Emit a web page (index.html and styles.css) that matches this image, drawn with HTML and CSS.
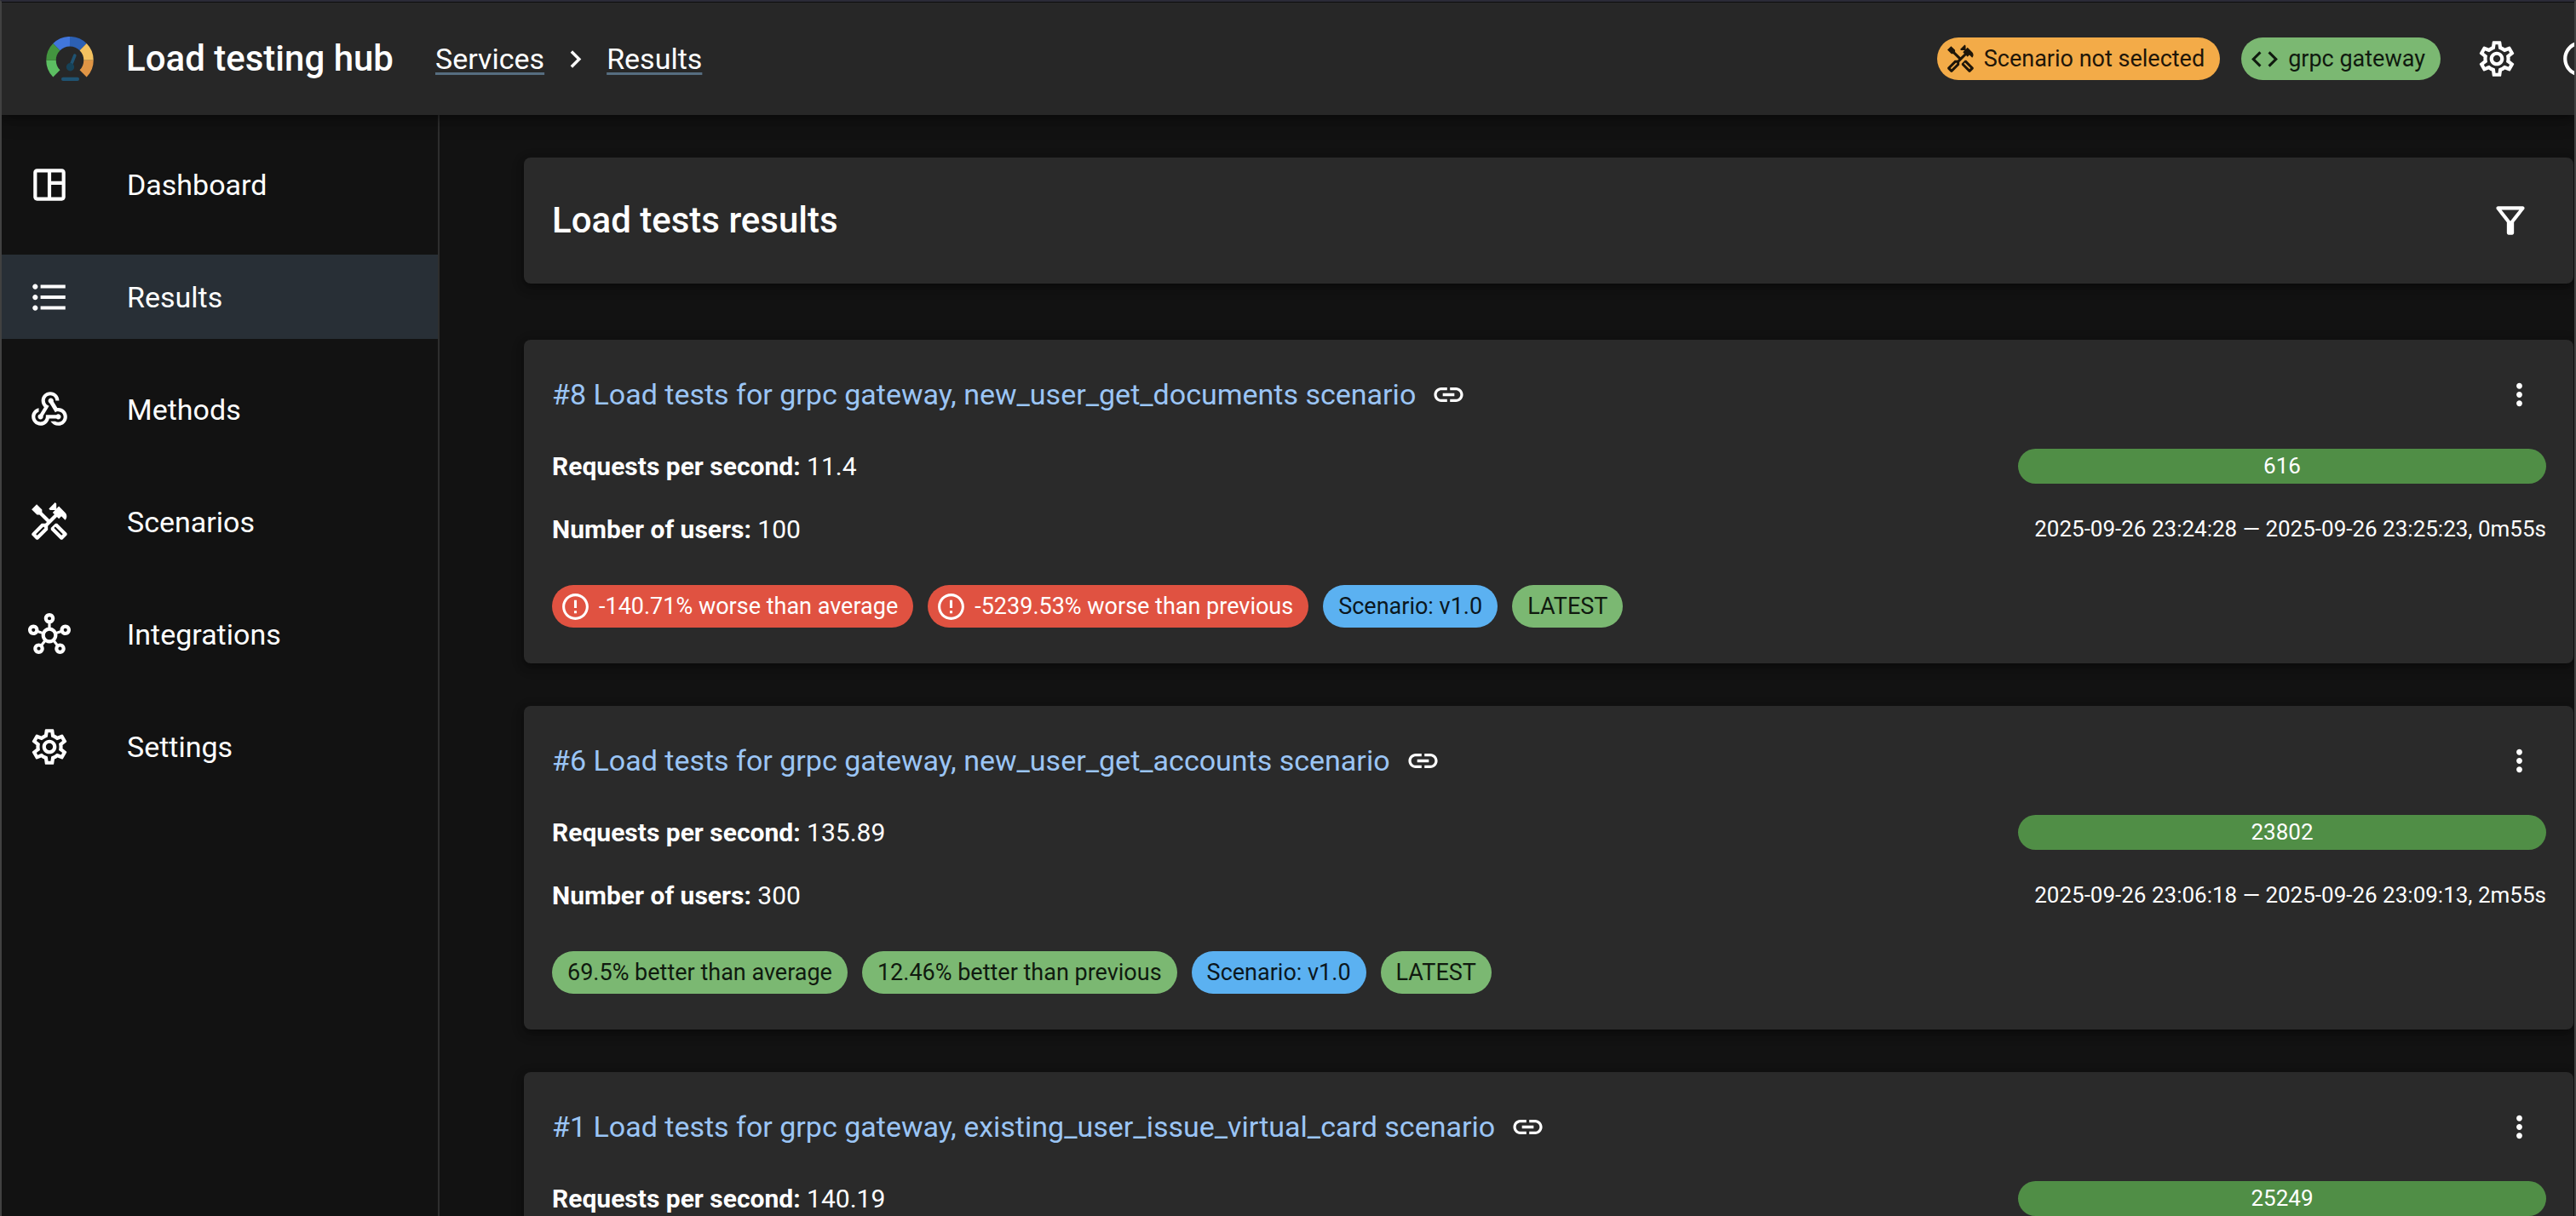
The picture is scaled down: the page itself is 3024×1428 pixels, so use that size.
FILE: index.html
```html
<!DOCTYPE html>
<html lang="en">
<head>
<meta charset="utf-8">
<meta name="viewport" content="width=device-width, initial-scale=1">
<title>Load testing hub</title>
<link rel="stylesheet" href="styles.css">
</head>
<body>
<svg class="sprite" aria-hidden="true">
  <symbol id="i-dashboard" viewBox="0 0 24 24"><path d="M19 3H5c-1.1 0-2 .9-2 2v14c0 1.1.9 2 2 2h14c1.1 0 2-.9 2-2V5c0-1.1-.9-2-2-2zM5 19V5h6v14H5zm14 0h-6v-7h6v7zm0-9h-6V5h6v5z"/></symbol>
  <symbol id="i-list" viewBox="0 0 24 24"><path d="M4 10.5c-.83 0-1.5.67-1.5 1.5s.67 1.5 1.5 1.5 1.5-.67 1.5-1.5-.67-1.5-1.5-1.5zm0-6c-.83 0-1.5.67-1.5 1.5S3.17 7.5 4 7.5 5.5 6.83 5.5 6 4.83 4.5 4 4.5zm0 12c-.83 0-1.5.68-1.5 1.5s.68 1.5 1.5 1.5 1.5-.68 1.5-1.5-.67-1.5-1.5-1.5zM7 19h14v-2H7v2zm0-6h14v-2H7v2zm0-8v2h14V5H7z"/></symbol>
  <symbol id="i-webhook" viewBox="0 0 24 24"><path d="M10 15h5.88c.27-.31.67-.5 1.12-.5.83 0 1.5.67 1.5 1.5s-.67 1.5-1.5 1.5c-.44 0-.84-.19-1.12-.5H11.9c-.46 2.28-2.48 4-4.9 4-2.76 0-5-2.24-5-5 0-2.42 1.72-4.44 4-4.9v2.07c-1.16.41-2 1.53-2 2.83 0 1.65 1.35 3 3 3s3-1.35 3-3v-1zm2.500-11c1.650 0 3 1.350 3 3h2c0-2.760-2.240-5-5-5s-5 2.240-5 5c0 1.430.6 2.710 1.550 3.620l-2.350 3.900c-.68.140-1.200.750-1.200 1.480 0 .83.67 1.500 1.500 1.500s1.500-.67 1.500-1.500c0-.16-.02-.31-.07-.45l3.380-5.630C10.490 9.610 9.500 8.420 9.500 7c0-1.650 1.350-3 3-3zm4.500 9c-.64 0-1.230.2-1.720.54l-3.050-5.070c-.53-.28-.9-.83-.9-1.470 0-.83.67-1.500 1.500-1.500s1.500.67 1.500 1.500c0 .15-.02.29-.06.43l2.190 3.650c.18-.02.36-.03.54-.03 2.760 0 5 2.240 5 5s-2.240 5-5 5c-1.850 0-3.470-1.010-4.330-2.500h2.670c.48.32 1.050.5 1.660.5 1.650 0 3-1.350 3-3s-1.350-3-3-3z"/></symbol>
  <symbol id="i-tools" viewBox="0 0 24 24"><path d="m21.670 18.170-5.300-5.300h-.99l-2.540 2.540v.99l5.300 5.300c.39.39 1.020.39 1.410 0l2.120-2.120c.39-.38.39-1.020 0-1.410zm-2.830 1.420-4.240-4.240.71-.71 4.240 4.240-.71.71z"/><path d="m17.340 10.190 1.410-1.410 2.120 2.120c1.170-1.170 1.170-3.070 0-4.240l-3.540-3.540-1.410 1.410V1.710L15.220 1l-3.540 3.540.71.71h2.830l-1.410 1.410 1.060 1.060-2.890 2.890-4.130-4.130V5.060L4.830 2.040 2 4.870 5.030 7.900h1.410l4.130 4.130-.85.85H7.600l-5.300 5.300c-.39.39-.39 1.020 0 1.410l2.120 2.120c.39.39 1.020.39 1.410 0l5.300-5.300v-2.120l5.150-5.150 1.060 1.050zm-7.980 5.150-4.240 4.240-.71-.71 4.240-4.240.71.71z"/></symbol>
  <symbol id="i-hub" viewBox="0 0 24 24"><path fill-rule="evenodd" d="M8.400 18.200c.38.5.6 1.120.6 1.800 0 1.660-1.340 3-3 3s-3-1.340-3-3 1.340-3 3-3c.44 0 .85.09 1.230.26l1.410-1.770c-.92-1.030-1.290-2.390-1.090-3.690l-2.030-.68c-.54.83-1.460 1.380-2.520 1.380-1.660 0-3-1.340-3-3s1.340-3 3-3 3 1.340 3 3c0 .07 0 .14-.01.21l2.030.68c.64-1.210 1.820-2.090 3.220-2.320V5.910C9.960 5.570 9 4.400 9 3c0-1.660 1.340-3 3-3s3 1.340 3 3c0 1.400-.96 2.570-2.250 2.910v2.160c1.400.23 2.580 1.110 3.220 2.320l2.030-.68C18 9.640 18 9.570 18 9.500c0-1.660 1.340-3 3-3s3 1.340 3 3-1.340 3-3 3c-1.060 0-1.980-.55-2.520-1.370l-2.030.68c.2 1.290-.16 2.650-1.090 3.690l1.410 1.770C17.150 17.090 17.560 17 18 17c1.660 0 3 1.340 3 3s-1.340 3-3 3-3-1.340-3-3c0-.68.22-1.300.6-1.800l-1.410-1.770c-1.350.75-3.010.76-4.370 0L8.400 18.200zM11 3a1 1 0 1 0 2 0a1 1 0 1 0-2 0zM2 9.500a1 1 0 1 0 2 0a1 1 0 1 0-2 0zM20 9.500a1 1 0 1 0 2 0a1 1 0 1 0-2 0zM5 20a1 1 0 1 0 2 0a1 1 0 1 0-2 0zM17 20a1 1 0 1 0 2 0a1 1 0 1 0-2 0zM9.500 12.500a2.500 2.500 0 1 0 5 0a2.500 2.500 0 1 0-5 0z"/></symbol>
  <symbol id="i-settings" viewBox="0 0 24 24"><path d="M19.430 12.980c.04-.32.07-.64.07-.98 0-.34-.03-.66-.07-.98l2.110-1.650c.19-.15.24-.42.12-.64l-2-3.460c-.09-.16-.26-.25-.44-.25-.06 0-.12.01-.17.03l-2.490 1c-.52-.4-1.080-.73-1.690-.98l-.38-2.650C14.460 2.180 14.250 2 14 2h-4c-.25 0-.46.18-.49.42l-.38 2.650c-.61.25-1.170.59-1.690.98l-2.490-1c-.06-.02-.12-.03-.18-.03-.17 0-.34.09-.43.25l-2 3.460c-.13.22-.07.49.12.64l2.110 1.650c-.04.32-.07.65-.07.98 0 .33.03.66.07.98l-2.110 1.650c-.19.15-.24.42-.12.64l2 3.460c.09.16.26.25.44.25.06 0 .12-.01.17-.03l2.490-1c.52.4 1.080.73 1.690.98l.38 2.650c.03.24.24.42.49.42h4c.25 0 .46-.18.49-.42l.38-2.650c.61-.25 1.170-.59 1.690-.98l2.490 1c.06.02.12.03.18.03.17 0 .34-.09.43-.25l2-3.460c.12-.22.07-.49-.12-.64l-2.110-1.650zm-1.980-1.710c.04.31.05.52.05.73 0 .21-.02.43-.05.73l-.14 1.130.89.7 1.080.84-.7 1.210-1.270-.51-1.040-.42-.9.68c-.43.32-.84.56-1.250.73l-1.060.43-.16 1.130-.2 1.350h-1.400l-.19-1.350-.16-1.130-1.060-.43c-.43-.18-.83-.41-1.230-.71l-.91-.7-1.060.43-1.270.51-.7-1.210 1.080-.84.89-.7-.14-1.130c-.03-.31-.05-.54-.05-.74s.02-.43.05-.73l.14-1.130-.89-.7-1.080-.84.7-1.210 1.270.51 1.040.42.9-.68c.43-.32.84-.56 1.250-.73l1.060-.43.16-1.130.2-1.350h1.390l.19 1.350.16 1.130 1.060.43c.43.18.83.41 1.230.71l.91.7 1.060-.43 1.270-.51.7 1.210-1.070.85-.89.7.14 1.130zM12 8c-2.210 0-4 1.790-4 4s1.790 4 4 4 4-1.790 4-4-1.790-4-4-4zm0 6c-1.100 0-2-.9-2-2s.9-2 2-2 2 .9 2 2-.9 2-2 2z"/></symbol>
  <symbol id="i-filter" viewBox="0 0 24 24"><path d="M7 6h10l-5.010 6.300L7 6zm-2.750-.39C6.270 8.200 10 13 10 13v6c0 .55.45 1 1 1h2c.55 0 1-.45 1-1v-6s3.720-4.800 5.740-7.390c.51-.66.04-1.610-.79-1.610H5.040c-.83 0-1.300.95-.79 1.610z"/></symbol>
  <symbol id="i-more" viewBox="0 0 24 24"><path d="M12 8c1.100 0 2-.9 2-2s-.9-2-2-2-2 .9-2 2 .9 2 2 2zm0 2c-1.100 0-2 .9-2 2s.9 2 2 2 2-.9 2-2-.9-2-2-2zm0 6c-1.100 0-2 .9-2 2s.9 2 2 2 2-.9 2-2-.9-2-2-2z"/></symbol>
  <symbol id="i-link" viewBox="0 0 24 24"><path d="M3.900 12c0-1.710 1.390-3.100 3.100-3.100h4V7H7c-2.760 0-5 2.240-5 5s2.240 5 5 5h4v-1.900H7c-1.710 0-3.100-1.390-3.100-3.100zM8 13h8v-2H8v2zm9-6h-4v1.900h4c1.710 0 3.100 1.390 3.100 3.100s-1.390 3.100-3.100 3.100h-4V17h4c2.760 0 5-2.240 5-5s-2.240-5-5-5z"/></symbol>
  <symbol id="i-error" viewBox="0 0 24 24"><path d="M11 15h2v2h-2zm0-8h2v6h-2zm.99-5C6.470 2 2 6.480 2 12s4.470 10 9.990 10C17.520 22 22 17.520 22 12S17.520 2 11.990 2zM12 20c-4.420 0-8-3.580-8-8s3.580-8 8-8 8 3.580 8 8-3.580 8-8 8z"/></symbol>
  <symbol id="i-code" viewBox="0 0 24 24"><path d="M9.400 16.600 4.800 12l4.600-4.600L8 6l-6 6 6 6 1.400-1.400zm5.200 0 4.600-4.600-4.600-4.600L16 6l6 6-6 6-1.400-1.400z"/></symbol>
  <symbol id="i-next" viewBox="0 0 24 24"><path d="M10 6 8.590 7.410 13.170 12l-4.580 4.590L10 18l6-6z"/></symbol>
  <symbol id="i-circle" viewBox="0 0 24 24"><path d="M12 2C6.480 2 2 6.480 2 12s4.480 10 10 10 10-4.480 10-10S17.520 2 12 2zm0 18c-4.410 0-8-3.590-8-8s3.590-8 8-8 8 3.590 8 8-3.590 8-8 8z"/></symbol>
</svg>

<header class="topbar">
  <svg class="logo" viewBox="0 0 56 52" aria-hidden="true">
    <g fill="none" stroke-width="11.500">
      <path stroke="#5cbf62" d="M12.400 43.400A22 22 0 0 1 6 27.700"/>
      <path stroke="#43953f" d="M6 27.700A22 22 0 0 1 12.400 12.100"/>
      <path stroke="#4176dd" d="M12.400 12.100A22 22 0 0 1 28 5.700"/>
      <path stroke="#2c60b4" d="M28 5.700A22 22 0 0 1 43.600 12.100"/>
      <path stroke="#f3c260" d="M43.600 12.100A22 22 0 0 1 50 27.700"/>
      <path stroke="#e09545" d="M50 27.700A22 22 0 0 1 43.600 43.400"/>
    </g>
    <path fill="none" stroke="#1f5372" stroke-width="3.600" stroke-linecap="round" d="M33.800 22.200L28.600 35"/>
    <circle cx="28.500" cy="35.800" r="4.700" fill="#164258"/>
    <rect x="18" y="47.700" width="21" height="4.300" rx="2" fill="#1f5372"/>
  </svg>
  <span class="brand">Load testing hub</span>
  <nav class="crumbs" aria-label="Breadcrumb">
    <a href="#services">Services</a>
    <svg class="icon icon-md" aria-hidden="true"><use href="#i-next"/></svg>
    <a href="#results">Results</a>
  </nav>
  <div class="actions">
    <button class="chip chip-orange" type="button"><svg class="icon icon-sm" aria-hidden="true"><use href="#i-tools"/></svg>Scenario not selected</button>
    <button class="chip chip-green" type="button"><svg class="icon icon-sm" aria-hidden="true"><use href="#i-code"/></svg>grpc gateway</button>
    <button class="icon-btn" type="button" aria-label="Settings"><svg class="icon" aria-hidden="true"><use href="#i-settings"/></svg></button>
    <button class="icon-btn" type="button" aria-label="Theme"><svg class="icon" aria-hidden="true"><use href="#i-circle"/></svg></button>
  </div>
</header>

<div class="shell">
  <nav class="sidebar" aria-label="Main">
    <a class="nav-item" href="#dashboard"><svg class="icon" aria-hidden="true"><use href="#i-dashboard"/></svg>Dashboard</a>
    <a class="nav-item is-active" href="#results"><svg class="icon" aria-hidden="true"><use href="#i-list"/></svg>Results</a>
    <a class="nav-item" href="#methods"><svg class="icon" aria-hidden="true"><use href="#i-webhook"/></svg>Methods</a>
    <a class="nav-item" href="#scenarios"><svg class="icon" aria-hidden="true"><use href="#i-tools"/></svg>Scenarios</a>
    <a class="nav-item" href="#integrations"><svg class="icon" aria-hidden="true"><use href="#i-hub"/></svg>Integrations</a>
    <a class="nav-item" href="#settings"><svg class="icon" aria-hidden="true"><use href="#i-settings"/></svg>Settings</a>
  </nav>

  <main class="content">
    <section class="card title-card">
      <h1>Load tests results</h1>
      <button class="icon-btn" type="button" aria-label="Filter"><svg class="icon" aria-hidden="true"><use href="#i-filter"/></svg></button>
    </section>

    <div class="results">
      <article class="card result">
        <div class="result-head">
          <a class="result-title" href="#8">#8 Load tests for grpc gateway, new_user_get_documents scenario</a>
          <svg class="icon icon-md" aria-hidden="true"><use href="#i-link"/></svg>
          <button class="icon-btn menu" type="button" aria-label="More"><svg class="icon icon-md" aria-hidden="true"><use href="#i-more"/></svg></button>
        </div>
        <div class="result-body">
          <div class="stats">
            <p><strong>Requests per second:</strong> 11.4</p>
            <p><strong>Number of users:</strong> 100</p>
          </div>
          <div class="run">
            <div class="bar">616</div>
            <p class="period">2025-09-26 23:24:28 — 2025-09-26 23:25:23, 0m55s</p>
          </div>
        </div>
        <div class="chips">
          <span class="chip chip-red"><svg class="icon icon-sm" aria-hidden="true"><use href="#i-error"/></svg>-140.71% worse than average</span>
          <span class="chip chip-red"><svg class="icon icon-sm" aria-hidden="true"><use href="#i-error"/></svg>-5239.53% worse than previous</span>
          <span class="chip chip-blue">Scenario: v1.0</span>
          <span class="chip chip-green">LATEST</span>
        </div>
      </article>

      <article class="card result">
        <div class="result-head">
          <a class="result-title" href="#6">#6 Load tests for grpc gateway, new_user_get_accounts scenario</a>
          <svg class="icon icon-md" aria-hidden="true"><use href="#i-link"/></svg>
          <button class="icon-btn menu" type="button" aria-label="More"><svg class="icon icon-md" aria-hidden="true"><use href="#i-more"/></svg></button>
        </div>
        <div class="result-body">
          <div class="stats">
            <p><strong>Requests per second:</strong> 135.89</p>
            <p><strong>Number of users:</strong> 300</p>
          </div>
          <div class="run">
            <div class="bar">23802</div>
            <p class="period">2025-09-26 23:06:18 — 2025-09-26 23:09:13, 2m55s</p>
          </div>
        </div>
        <div class="chips">
          <span class="chip chip-green">69.5% better than average</span>
          <span class="chip chip-green">12.46% better than previous</span>
          <span class="chip chip-blue">Scenario: v1.0</span>
          <span class="chip chip-green">LATEST</span>
        </div>
      </article>

      <article class="card result">
        <div class="result-head">
          <a class="result-title" href="#1">#1 Load tests for grpc gateway, existing_user_issue_virtual_card scenario</a>
          <svg class="icon icon-md" aria-hidden="true"><use href="#i-link"/></svg>
          <button class="icon-btn menu" type="button" aria-label="More"><svg class="icon icon-md" aria-hidden="true"><use href="#i-more"/></svg></button>
        </div>
        <div class="result-body">
          <div class="stats">
            <p><strong>Requests per second:</strong> 140.19</p>
          </div>
          <div class="run">
            <div class="bar">25249</div>
          </div>
        </div>
      </article>
    </div>
  </main>
</div>
</body>
</html>
```
FILE: styles.css
```css
* {
  box-sizing: border-box;
}

body {
  margin: 0;
  height: 100vh;
  display: flex;
  flex-direction: column;
  overflow: hidden;
  border-top: 2px solid #2b2b37;
  border-left: 2px solid #414141;
  border-right: 2px solid #414141;
  background: #121212;
  color: #fff;
  font-family: Roboto, "Liberation Sans", sans-serif;
  font-size: 34px;
  line-height: 50px;
}

p,
h1 {
  margin: 0;
}

a {
  color: inherit;
  text-decoration: none;
}

button {
  border: 0;
  padding: 0;
  background: none;
  color: inherit;
  font: inherit;
}

.sprite {
  position: absolute;
  width: 0;
  height: 0;
}

.icon {
  width: 50px;
  height: 50px;
  flex: none;
  display: block;
  fill: currentColor;
}

.icon-md {
  width: 41px;
  height: 41px;
}

.icon-sm {
  width: 37px;
  height: 37px;
}

.icon-btn {
  display: block;
  flex: none;
}

.topbar {
  position: relative;
  z-index: 1;
  flex: none;
  display: flex;
  align-items: center;
  height: 133px;
  padding-left: 52px;
  border-top: 1px solid #0e0e0e;
  background: #272727;
  box-shadow: 0 4px 8px rgba(0, 0, 0, 0.3), 0 8px 20px rgba(0, 0, 0, 0.2);
}

.logo {
  width: 56px;
  height: 52px;
  flex: none;
}

.brand {
  margin: 0 49px 0 38px;
  font-size: 42px;
  font-weight: 500;
  white-space: nowrap;
}

.crumbs {
  display: flex;
  align-items: center;
  gap: 16px;
}

.crumbs a {
  text-decoration: underline;
  text-decoration-color: #566d80;
  text-decoration-thickness: 3px;
  text-underline-offset: 4px;
}

.actions {
  display: flex;
  align-items: center;
  gap: 25px;
  margin-left: auto;
  margin-right: -33px;
}

.actions .icon-btn {
  margin-left: 16px;
}

.actions .icon-btn + .icon-btn {
  margin-left: 24px;
}

.chip {
  display: inline-flex;
  align-items: center;
  gap: 9px;
  height: 50px;
  padding: 0 18px;
  border-radius: 25px;
  font-size: 27px;
  white-space: nowrap;
}

.chip:has(.icon) {
  padding-left: 9px;
}

.chip-orange {
  background: #f3ab48;
  color: #1f1609;
}

.chip-green {
  background: #7bb872;
  color: #101a0f;
}

.chip-blue {
  background: #5bb1f1;
  color: #0b1720;
}

.chip-red {
  background: #e05241;
}

.shell {
  flex: 1;
  min-height: 0;
  display: flex;
}

.sidebar {
  flex: none;
  width: 514px;
  display: flex;
  flex-direction: column;
  gap: 33px;
  padding-top: 32px;
  border-right: 2px solid #2e2e2e;
}

.nav-item {
  display: flex;
  align-items: center;
  gap: 66px;
  height: 99px;
  padding-left: 31px;
}

.nav-item.is-active {
  background: #282f36;
}

.content {
  flex: 1;
  min-width: 0;
  display: flex;
  flex-direction: column;
  gap: 66px;
  padding: 50px 1px 0 99px;
}

.card {
  border-radius: 8px;
  background: #2a2a2a;
  box-shadow: 0 4px 8px rgba(0, 0, 0, 0.3), 0 4px 16px rgba(0, 0, 0, 0.2);
}

.title-card {
  flex: none;
  display: flex;
  align-items: center;
  justify-content: space-between;
  height: 148px;
  padding: 0 49px 0 33px;
}

.title-card h1 {
  font-size: 42px;
  font-weight: 500;
}

.results {
  display: flex;
  flex-direction: column;
  gap: 50px;
}

.result {
  flex: none;
  height: 380px;
  padding: 39px 32px 0 33px;
}

.result-head {
  display: flex;
  align-items: center;
  gap: 18px;
}

.result-title {
  color: #9bc5f5;
}

.menu {
  margin-left: auto;
  margin-right: 11px;
}

.result-body {
  display: flex;
  justify-content: space-between;
  margin-top: 39px;
  font-size: 30px;
  line-height: 41px;
}

.stats,
.run {
  display: flex;
  flex-direction: column;
  gap: 33px;
}

.run {
  width: 620px;
}

.bar {
  height: 41px;
  border-radius: 21px;
  background: #508e46;
  font-size: 26px;
  text-align: center;
}

.period {
  font-size: 26px;
  text-align: right;
  white-space: nowrap;
}

.chips {
  display: flex;
  gap: 17px;
  margin-top: 45px;
}
```
